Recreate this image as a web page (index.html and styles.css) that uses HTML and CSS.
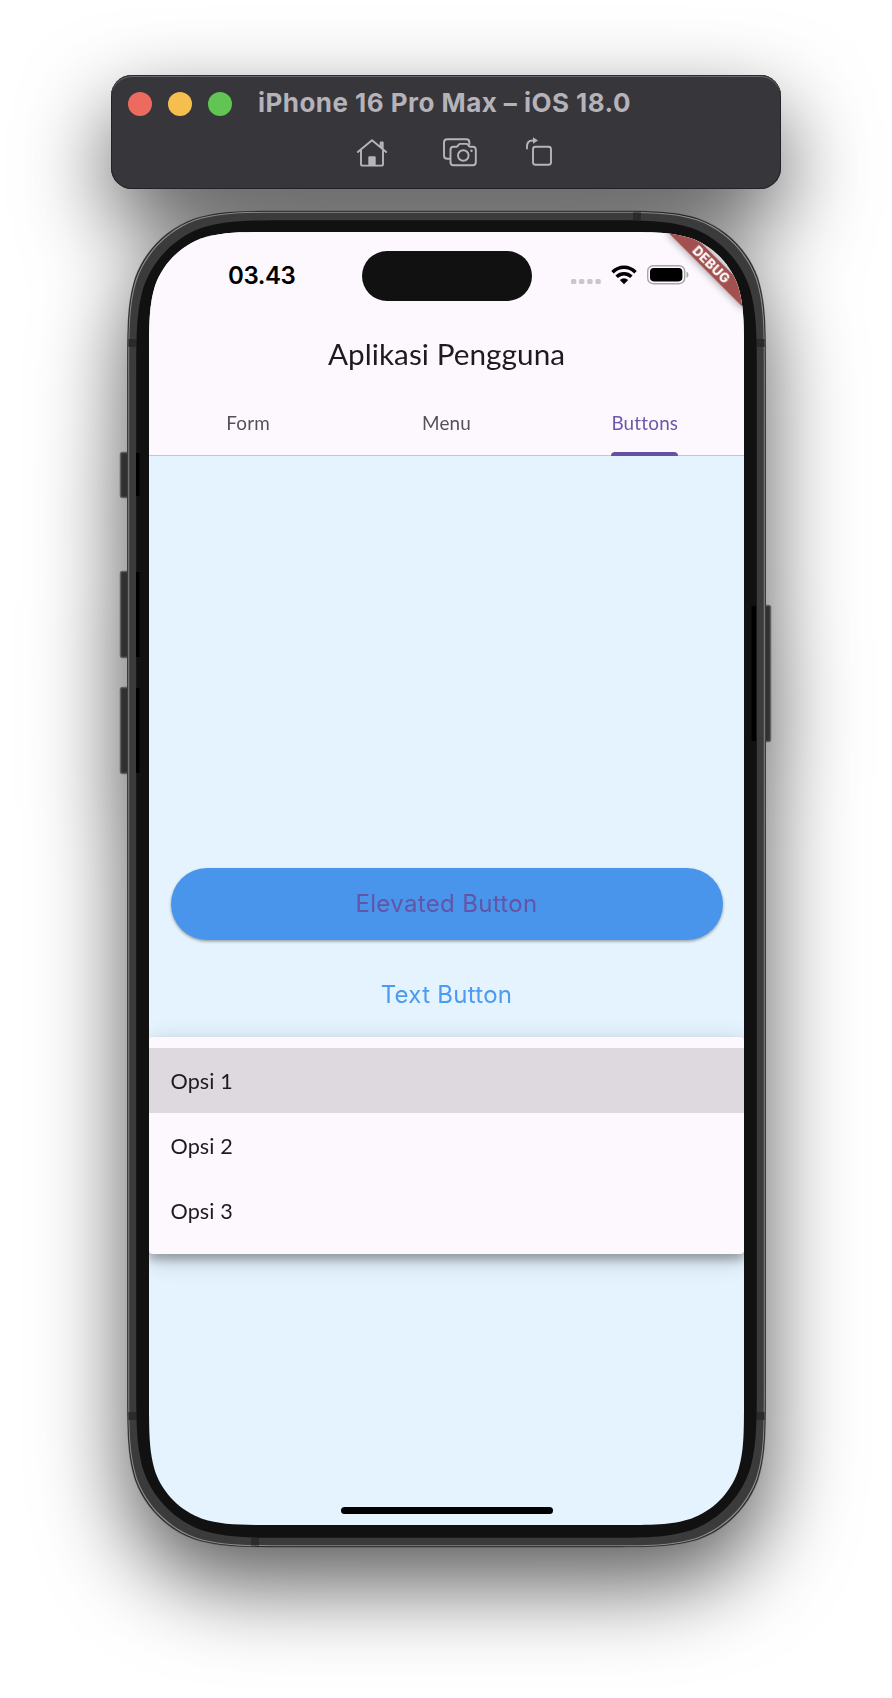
FILE: index.html
```html
<!DOCTYPE html>
<html lang="id">
<head>
<meta charset="utf-8">
<title>Aplikasi Pengguna</title>
<link rel="stylesheet" href="styles.css">
</head>
<body>
<main class="simulator">
  <header class="toolbar">
    <div class="toolbar-top">
      <div class="lights"><i class="light red"></i><i class="light yellow"></i><i class="light green"></i></div>
      <h1 class="window-title">iPhone 16 Pro Max – iOS 18.0</h1>
    </div>
    <div class="tools">
      <svg class="tool" width="32" height="32" viewBox="0 0 32 32"><path d="M1.800 15 16 3.300l14.200 11.700M5 12.600v14.300q0 1.700 1.700 1.700h18.600q1.700 0 1.700-1.700V12.600M24.700 10V5.500h2v6.600"/><path class="solid" d="M12.300 28.500v-8q0-1.200 1.200-1.200h5q1.200 0 1.200 1.200v8z"/></svg>
      <svg class="tool tool-camera" width="34" height="32" viewBox="0 0 34 32"><path d="M7 21.800H4.200Q1 21.800 1 18.700V5.500q0-3.200 3.200-3.200h19q3.200 0 3.200 3.200v1.600"/><path d="M10.500 9.800h2.700q1 0 1.600-.9l.8-1.100q.6-.9 1.700-.9h6q1.100 0 1.700.9l.8 1.100q.6.9 1.600.9h2.400q3 0 3 3v12.400q0 3-3 3H10.500q-3 0-3-3V12.800q0-3 3-3z"/><circle cx="20.300" cy="18.500" r="5.300"/><circle class="solid" cx="28.500" cy="13.800" r="1.200"/></svg>
      <svg class="tool tool-rotate" width="30" height="32" viewBox="0 0 30 32"><rect x="8" y="9.700" width="18" height="18" rx="2.500"/><path d="M2 11.500v-1.700Q2 3.500 7.500 3.500H9"/><path class="solid" d="m8 .3 5 3.200-5 3.300z"/></svg>
    </div>
  </header>

  <section class="device">
    <svg class="frame" width="655" height="1339" viewBox="119 210 655 1339">
      <g class="key">
        <rect x="120.500" y="452.500" width="12" height="45" rx="2"/><rect x="120.500" y="571.500" width="12" height="86" rx="2"/><rect x="120.500" y="687.500" width="12" height="86" rx="2"/><rect x="760.500" y="605.500" width="10" height="136" rx="2"/>
      </g>
      <defs>
        <path id="shell" d="M162 0C115.400 0 92 0 66.900 7.900 39.500 17.900 17.900 39.500 7.900 66.900 0 92 0 115.400 0 162V1175C0 1221.600 0 1245 7.900 1270.100 17.900 1297.500 39.500 1319.100 66.900 1329.100 92 1337 115.400 1337 162 1337H477C523.600 1337 547 1337 572.100 1329.100 599.500 1319.100 621.100 1297.500 631.100 1270.100 639 1245 639 1221.600 639 1175V162C639 115.400 639 92 631.100 66.900 621.100 39.500 599.500 17.900 572.100 7.900 547 0 523.600 0 477 0z"/>
      </defs>
      <use href="#shell" fill="#555" transform="translate(127 210.500)"/>
      <use href="#shell" fill="#1b1b1b" transform="translate(127.600 211.100) scale(.9981 .9991)"/>
      <use href="#shell" fill="#8a8a8a" transform="translate(128.200 211.700) scale(.99625 .9982)"/>
      <use href="#shell" fill="#3b3b3b" transform="translate(129.200 212.700) scale(.9931 .9967)"/>
      <g fill="#2b2b2b"><path d="M128.500 339h8v8h-8zM756.500 339h8v8h-8zM128.500 1412h8v8h-8zM756.500 1412h8v8h-8zM633 212.500h8v8h-8zM251 1537.500h8v8h-8z"/></g>
      <use href="#shell" fill="#111" transform="translate(136.200 220.300) scale(.9712 .9854)"/>
      <path fill="#000" d="M136 453h3.500v43H136zM136 572h3.500v85H136zM136 688h3.500v85H136zM751.500 606h4.500v135h-4.500z"/>
    </svg>
    <div class="screen">
      <div class="app-top">
        <div class="status">
          <span class="time">03.43</span>
          <span class="island"></span>
          <div class="status-icons">
            <svg width="31" height="22" viewBox="0 0 31 22" fill="#cbc6cc"><rect x="0" y="15" width="5.400" height="5" rx="1.500"/><rect x="8" y="15" width="5.400" height="5" rx="1.500"/><rect x="16.200" y="15" width="5.400" height="5" rx="1.500"/><rect x="24.400" y="15" width="5.400" height="5" rx="1.500"/></svg>
            <svg class="wifi" width="26" height="20" viewBox="0 0 26 20" fill="none" stroke="#000" stroke-width="3.500"><path d="M1.500 7.200Q6.500 2.200 13 2.200T24.500 7.200M5.600 11.700Q8.800 8.700 13 8.700t7.400 3"/><path d="m8.800 15 4.200 4.200L17.200 15Q13 11.600 8.800 15z" fill="#000" stroke="none"/></svg>
            <svg class="battery" width="43" height="22" viewBox="0 0 43 22"><rect x=".7" y="1.700" width="37" height="18" rx="5.500" fill="none" stroke="#a9a5aa" stroke-width="1.400"/><rect x="3" y="4" width="32.400" height="13.400" rx="3.800"/><path d="M39.500 7.500v6.400q2-.8 2-3.200t-2-3.200z" fill="#a9a5aa"/></svg>
          </div>
        </div>
        <h2 class="app-title">Aplikasi Pengguna</h2>
        <nav class="tabs">
          <a class="tab"><span>Form</span></a>
          <a class="tab"><span>Menu</span></a>
          <a class="tab active"><span>Buttons</span></a>
        </nav>
      </div>
      <div class="content">
        <button class="elevated">Elevated Button</button>
        <button class="text-button">Text Button</button>
        <ul class="menu">
          <li class="option selected">Opsi 1</li>
          <li class="option">Opsi 2</li>
          <li class="option">Opsi 3</li>
        </ul>
        <div class="home-bar"></div>
      </div>
      <div class="debug">DEBUG</div>
    </div>
  </section>
</main>
</body>
</html>
```
FILE: styles.css
```css
* { box-sizing: border-box; }
body { margin: 0; background: #fff; overflow: hidden; }
.simulator {
  width: 892px; height: 1698px; padding-top: 75px;
  display: flex; flex-direction: column; align-items: center;
  filter: drop-shadow(0 36px 44px rgba(0,0,0,.65));
}
.toolbar {
  width: 670px; height: 114px; border-radius: 21px; background: #37363b;
  box-shadow: inset 0 1px 0 #2b2d2f, inset 0 2px 0 #66686b, inset 0 0 0 1px #222325;
  padding: 12px 17px 0;
}
.toolbar-top { display: flex; align-items: center; height: 34px; }
.lights { display: flex; gap: 16px; }
.light { width: 24px; height: 24px; border-radius: 50%; }
.red { background: #ed6a5e; }
.yellow { background: #f5bf4f; }
.green { background: #61c554; }
.window-title { margin: -3px 0 0 26px; font: 700 26px/34px Inter, sans-serif; letter-spacing: .46px; color: #b5b3b9; white-space: nowrap; }
.tools { display: flex; padding: 16px 0 0 228px; }
.tool { fill: none; stroke: #b7b5ba; stroke-width: 1.900; stroke-linecap: round; stroke-linejoin: round; }
.tool .solid { fill: #b7b5ba; stroke: none; }
.tool-camera { margin-left: 55px; }
.tool-rotate { margin-left: 48px; }
.device { position: relative; width: 639px; height: 1337px; margin-top: 21px; padding: 22px 22px; }
.frame { position: absolute; left: -8px; top: 0; }
.key { fill: #303030; stroke: #5f5f5f; stroke-width: 1.500; }
.screen {
  position: relative; width: 595px; height: 1293px; margin-left: .5px; overflow: hidden; background: #e4f3fd;
  display: flex; flex-direction: column;
  clip-path: path("M128 0C91.400 0 73 0 53 6.300C31.300 14.200 14.200 31.300 6.300 53C0 73 0 91.400 0 128V1165C0 1201.600 0 1220 6.300 1240C14.200 1261.700 31.300 1278.800 53 1286.700C73 1293 91.400 1293 128 1293H467C503.600 1293 522 1293 542 1286.700C563.700 1278.800 580.800 1261.700 588.700 1240C595 1220 595 1201.600 595 1165V128C595 91.400 595 73 588.700 53C580.800 31.300 563.700 14.200 542 6.300C522 0 503.600 0 467 0Z");
}
.app-top { height: 224px; background: #fdf8fe; display: flex; flex-direction: column; }
.status { display: grid; grid-template-columns: 212.500px 170px 1fr; height: 69px; padding-top: 19px; align-items: center; }
.time { padding-left: 79px; font: 600 24px/50px Inter, sans-serif; letter-spacing: -.4px; color: #000; }
.island { height: 50px; border-radius: 25px; background: #111; }
.status-icons { display: flex; align-items: center; padding-left: 39.500px; margin-top: -2px; }
.wifi { margin-left: 9px; }
.battery { margin-left: 10px; }
.app-title { margin: 33px 0 0; text-align: center; font: 400 29.700px/40px Lato, sans-serif; letter-spacing: .06px; color: #1d1b20; }
.tabs { display: grid; grid-template-columns: 1fr 1fr 1fr; height: 65px; margin-top: auto; border-bottom: 1.400px solid #cac4d0; }
.tab { display: flex; justify-content: center; font: 400 18.900px/64px Lato, sans-serif; letter-spacing: .2px; color: #55515b; }
.tab.active { color: #6d57a8; }
.active span { position: relative; height: 65px; }
.active span::after { content: ""; position: absolute; left: 0; right: 0; bottom: 0; height: 4px; border-radius: 4px 4px 0 0; background: #65519f; }
.content { flex: 1; display: flex; flex-direction: column; padding-top: 412px; }
.elevated {
  margin: 0 21.500px; height: 72px; border: 0; border-radius: 36px; background: #4995ec; color: #6454a6;
  font: 400 24px/72px Inter, sans-serif; letter-spacing: .34px; padding: 0;
  box-shadow: 0 1.500px 3px rgba(0,0,0,.35);
}
.text-button { margin-top: 24px; height: 60px; border: 0; padding: 2px 0 0; background: none; color: #4b9bf0; font: 400 24px/58px Inter, sans-serif; letter-spacing: .28px; }
.menu {
  list-style: none; margin: 13px 0 0; padding: 11px 0; height: 217px; border-radius: 4px; background: #fdf8fe;
  box-shadow: 0 6px 9px rgba(0,0,0,.25), 0 6px 24px rgba(0,0,0,.2);
}
.option { height: 65px; padding-left: 21.500px; font: 400 21.600px/67px Lato, sans-serif; letter-spacing: .1px; color: #1d1b20; }
.option.selected { background: #ded9df; }
.home-bar { width: 212px; height: 7px; border-radius: 4px; background: #000; margin: auto auto 11px; }
.debug {
  position: absolute; right: -54px; top: 38px; width: 108px; height: 16.200px;
  transform-origin: 50% -38px; transform: rotate(45deg);
  background: #a35150; box-shadow: 0 0 8px rgba(0,0,0,.45);
  font: 800 13px/16.200px Inter, sans-serif; letter-spacing: .3px; color: #fff; text-align: center;
}
```
